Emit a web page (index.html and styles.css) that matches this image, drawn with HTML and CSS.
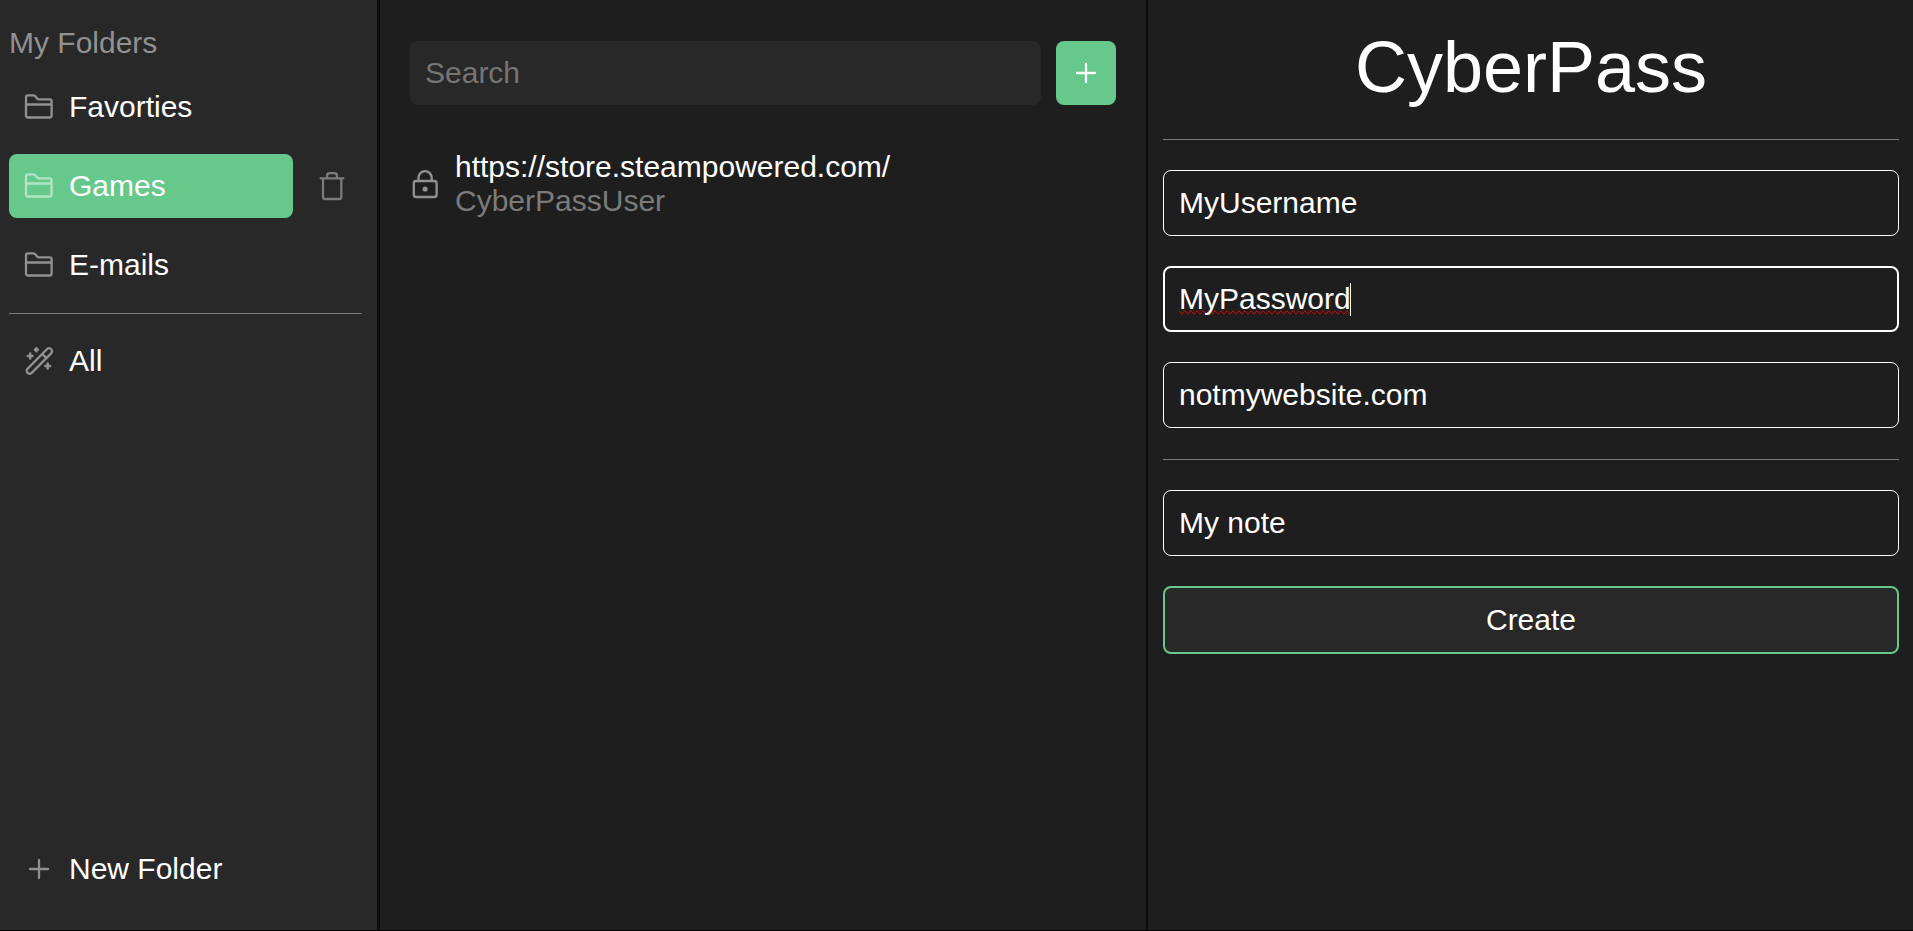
FILE: index.html
```html
<!DOCTYPE html>
<html lang="en">
<head>
<meta charset="utf-8">
<title>CyberPass</title>
<link rel="stylesheet" href="styles.css">
</head>
<body>
<svg class="defs" width="0" height="0">
  <symbol id="folder" viewBox="0 0 30 30"><path d="M2 5.300Q2 3.300 4 3.300H9.300Q10.400 3.300 11.200 4.200L13.400 6.800Q13.800 7.300 14.600 7.300H25.600Q27.600 7.300 27.600 9.300V23.500Q27.600 25.500 25.600 25.500H4Q2 25.500 2 23.500ZM2 12.500H27.600"/></symbol>
  <symbol id="plus" viewBox="0 0 30 30"><path d="M15 6V24M6 15H24"/></symbol>
</svg>
<div class="app">
  <aside class="sidebar">
    <div class="heading">My Folders</div>
    <nav class="folders">
      <div class="row"><div class="item"><svg class="icon"><use href="#folder"/></svg>Favorties</div></div>
      <div class="row"><div class="item active"><svg class="icon"><use href="#folder"/></svg>Games</div>
        <svg class="icon trash" viewBox="0 0 30 30"><path d="M3.700 7.400H26.300M6 7.400V26Q6 28 8 28H22.300Q24.300 28 24.300 26V7.400M10 7.400V5Q10 2.200 12.800 2.200H17.200Q20 2.200 20 5V7.400"/></svg></div>
      <div class="row"><div class="item"><svg class="icon"><use href="#folder"/></svg>E-mails</div></div>
    </nav>
    <div class="divider"></div>
    <div class="item all"><svg class="icon" viewBox="0 0 30 30"><path d="M3.200 23.100L22.900 3.200A2.950 2.950 0 0 1 27.100 7.400L7.400 27.100A2.950 2.950 0 0 1 3.200 23.100ZM18.300 8L22 11.700"/><path class="sparkle" d="M12.300 2.200V5.200M10.800 3.700H13.800M6.200 7.600V12.400M3.800 10H8.600M23.700 17.600V22.400M21.300 20H26.100"/></svg>All</div>
    <div class="item new"><svg class="icon"><use href="#plus"/></svg>New Folder</div>
  </aside>
  <main class="list">
    <div class="toolbar">
      <input class="search" placeholder="Search">
      <button class="add"><svg class="icon"><use href="#plus"/></svg></button>
    </div>
    <div class="entry">
      <svg class="icon" viewBox="0 0 30 30"><rect x="3.800" y="12" width="22.800" height="16" rx="2.200"/><path d="M8.500 12V8.800A6.600 6.600 0 0 1 21.700 8.800V12"/><circle class="dot" cx="15.100" cy="20" r="2.600"/></svg>
      <div><div class="site">https://store.steampowered.com/</div><div class="user">CyberPassUser</div></div>
    </div>
  </main>
  <section class="details">
    <h1 class="title">CyberPass</h1>
    <div class="divider"></div>
    <div class="field">MyUsername</div>
    <div class="field focused"><span class="misspelled">MyPassword</span><span class="caret"></span></div>
    <div class="field">notmywebsite.com</div>
    <div class="divider note-divider"></div>
    <div class="field">My note</div>
    <button class="create">Create</button>
  </section>
</div>
</body>
</html>
```
FILE: styles.css
```css
* { box-sizing: border-box; }
body { margin: 0; background: #000; color: #fff; font: 30px/34px "Liberation Sans", Arial, sans-serif; overflow: hidden; }
.defs { display: block; }
.app { display: grid; grid-template-columns: 380px 768px 1fr; height: 930px; background: #1e1e1e; }
.icon { width: 30px; height: 30px; flex: none; fill: none; stroke: currentColor; stroke-width: 2.3; stroke-linecap: round; stroke-linejoin: round; }
.sidebar { display: flex; flex-direction: column; background: #282828; border-right: 3px solid #0d0d0d; padding: 26px 15px 29px 9px; }
.heading { color: #919191; height: 34px; }
.folders { display: flex; flex-direction: column; gap: 15px; margin-top: 15px; }
.row { display: flex; align-items: center; height: 64px; }
.item { display: flex; align-items: center; gap: 15px; width: 284px; height: 64px; padding-left: 15px; border-radius: 8px; }
.item .icon { color: #919191; }
.item.active { background: #66c88a; }
.item.active .icon { color: #b3e4c6; }
.trash { margin-left: 24px; color: #7b7b7b; }
.divider { height: 1px; background: #7b7b7b; }
.sidebar .divider { margin-top: 16px; width: 353px; }
.all { margin-top: 15px; }
.sparkle { stroke-width: 2.5; }
.new { margin-top: auto; }
.list { border-right: 2px solid #0d0d0d; padding: 41px 30px 0; }
.toolbar { display: flex; gap: 15px; }
.search { flex: 1; min-width: 0; height: 64px; border: 0; border-radius: 8px; background: #282828; color: #fff; padding: 0 15px; font: inherit; outline: 0; }
.search::placeholder { color: #757575; opacity: 1; }
.add { display: flex; align-items: center; justify-content: center; width: 60px; height: 64px; padding: 0; border: 0; border-radius: 8px; background: #66c88a; color: #fff; }
.entry { display: flex; align-items: center; gap: 15px; margin-top: 45px; }
.entry .icon { color: #919191; }
.dot { fill: currentColor; stroke: none; }
.user { color: #7b7b7b; }
.details { padding: 26px 14px 0 15px; }
.title { margin: 0 0 31px; font-size: 72px; line-height: 82px; font-weight: 400; text-align: center; }
.field { display: flex; align-items: center; height: 66px; margin: 30px 0; padding-left: 15px; border: 1px solid #fff; border-radius: 8px; }
.field.focused { border-width: 2px; padding-left: 14px; }
.note-divider { margin-top: 31px; }
.misspelled { text-decoration-line: spelling-error; }
.caret { width: 1px; height: 33px; margin-left: -1px; background: #fff; }
.create { display: block; width: 100%; height: 68px; border: 2px solid #66c88a; border-radius: 8px; background: #282828; color: #fff; font: inherit; }
```
